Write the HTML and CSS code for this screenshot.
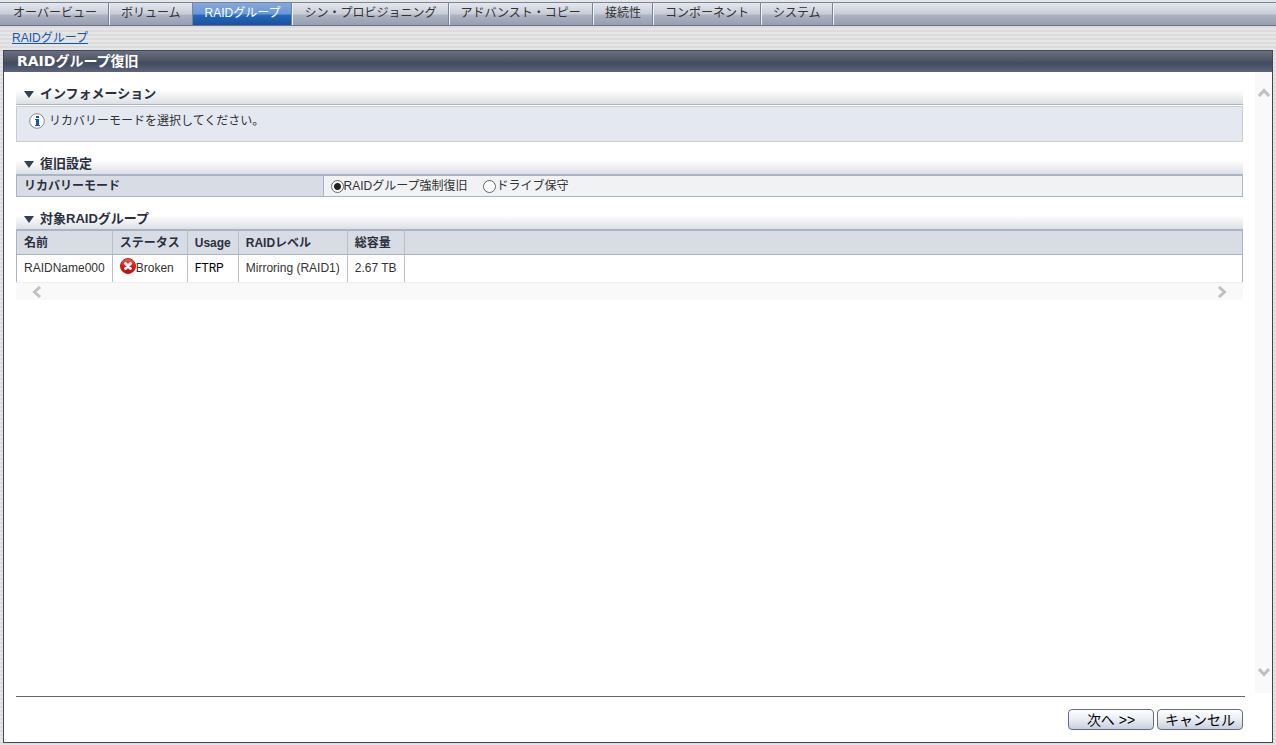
FILE: index.html
```html
<!DOCTYPE html>
<html lang="ja">
  <head>
    <meta charset="UTF-8" />
    <title>RAIDグループ復旧</title>
    <link rel="stylesheet" href="styles.css">
  </head>
  <body>
    <nav class="tabs">
      <a href="#">オーバービュー</a>
      <a href="#">ボリューム</a>
      <a href="#" class="active">RAIDグループ</a>
      <a href="#">シン・プロビジョニング</a>
      <a href="#">アドバンスト・コピー</a>
      <a href="#">接続性</a>
      <a href="#">コンポーネント</a>
      <a href="#">システム</a>
    </nav>
    <div class="breadcrumb"><a href="#">RAIDグループ</a></div>

    <main class="panel">
      <h1>RAIDグループ復旧</h1>
      <div class="scroll-area">
        <div class="content">
          <section>
            <h2>インフォメーション</h2>
            <div class="info">
              <svg width="16" height="16" viewBox="0 0 16 16">
                <circle cx="8" cy="8" r="7.3" fill="#fff" stroke="#85898f" />
                <path d="M7 3h3v2H7zM6 6h4v6h1v1H6v-1h1V7H6z" fill="#1258b0" />
              </svg>
              <span>リカバリーモードを選択してください。</span>
            </div>
          </section>

          <section>
            <h2>復旧設定</h2>
            <table class="setting">
              <tr>
                <th>リカバリーモード</th>
                <td>
                  <div class="radios">
                    <label><input type="radio" name="mode" checked />RAIDグループ強制復旧</label>
                    <label><input type="radio" name="mode" />ドライブ保守</label>
                  </div>
                </td>
              </tr>
            </table>
          </section>

          <section>
            <h2>対象RAIDグループ</h2>
            <table class="list">
              <thead>
                <tr>
                  <th>名前</th>
                  <th>ステータス</th>
                  <th>Usage</th>
                  <th>RAIDレベル</th>
                  <th>総容量</th>
                  <th class="rest"></th>
                </tr>
              </thead>
              <tbody>
                <tr>
                  <td>RAIDName000</td>
                  <td>
                    <div class="status">
                      <svg width="16" height="16" viewBox="0 0 16 16">
                        <defs>
                          <linearGradient id="red" x1="0" y1="0" x2="0" y2="1">
                            <stop offset="0" stop-color="#f0605c" />
                            <stop offset="0.5" stop-color="#e01818" />
                            <stop offset="1" stop-color="#b80c0c" />
                          </linearGradient>
                        </defs>
                        <circle cx="8" cy="8" r="7.5" fill="url(#red)" stroke="#b42020" />
                        <path d="M5.5 5.5l5 5M10.5 5.5l-5 5" stroke="#fff" stroke-width="3" stroke-linecap="round" />
                      </svg>
                      <span>Broken</span>
                    </div>
                  </td>
                  <td class="usage">FTRP</td>
                  <td>Mirroring (RAID1)</td>
                  <td>2.67 TB</td>
                  <td></td>
                </tr>
              </tbody>
            </table>
            <div class="hscroll">
              <svg width="10" height="12" viewBox="0 0 10 12"><path d="M8 1L2.5 6L8 11" /></svg>
              <svg width="10" height="12" viewBox="0 0 10 12"><path d="M2 1l5.5 5L2 11" /></svg>
            </div>
          </section>
        </div>
        <div class="vscroll">
          <svg width="12" height="10" viewBox="0 0 12 10"><path d="M1 8l5-5.5L11 8" /></svg>
          <svg width="12" height="10" viewBox="0 0 12 10"><path d="M1 2l5 5.5L11 2" /></svg>
        </div>
      </div>
      <div class="buttons">
        <button type="button">次へ &gt;&gt;</button>
        <button type="button">キャンセル</button>
      </div>
    </main>
  </body>
</html>
```
FILE: styles.css
```css
* {
  box-sizing: border-box;
}
body {
  display: flex;
  flex-direction: column;
  min-height: 100vh;
  margin: 0;
  font-family: "Liberation Sans", "Noto Sans CJK JP", sans-serif;
  font-size: 12px;
  line-height: 16px;
  color: #333;
  background: repeating-linear-gradient(#e6e6e6 0, #e6e6e6 2px, #dcdcdc 2px, #dcdcdc 4px);
}
.tabs {
  display: flex;
  height: 24px;
  margin-top: 2px;
  padding-left: 1px;
  border-top: 1px solid #77859a;
  border-bottom: 1px solid #6a7388;
  background: linear-gradient(#e4e7ee, #c8ccd6 50%, #adb3c2 55%, #969eb0);
}
.tabs a {
  padding: 2px 11px 0 12px;
  border-right: 1px solid #77859a;
  box-shadow: 1px 0 #eef1f6;
  color: #333;
  text-decoration: none;
  white-space: nowrap;
}
.tabs a.active {
  color: #fff;
  background: linear-gradient(#84a8dc, #6a98d4 50%, #2468bc 55%, #1c50a0);
}
.breadcrumb {
  height: 24px;
  padding: 4px 12px;
}
.breadcrumb a {
  color: #1258b0;
}
.panel {
  display: flex;
  flex-direction: column;
  flex: 1;
  margin: 0 3px 2px;
  border: 1px solid #3f4656;
  background: #fff;
}
h1 {
  height: 21px;
  margin: 0;
  padding: 0 13px;
  font-family: "DejaVu Sans", "Noto Sans CJK JP", sans-serif;
  font-size: 14px;
  line-height: 20px;
  color: #fff;
  background: linear-gradient(#697082, #4c515e 50%, #404b5f 55%, #5c6478);
}
.scroll-area {
  display: flex;
  flex: 1;
}
.content {
  flex: 1;
  padding: 12px 12px 0;
}
h2 {
  display: flex;
  align-items: center;
  gap: 6px;
  height: 21px;
  margin: 0;
  padding-left: 8px;
  font-size: 13px;
  color: #2b3040;
  background: linear-gradient(#fff 30%, #dce0e5);
  border-bottom: 1px solid #a9b5c5;
}
h2::before {
  content: "";
  border: 5px solid transparent;
  border-top: 7px solid #364052;
  border-bottom: 0;
}
section {
  margin-bottom: 12px;
}
.info {
  display: flex;
  gap: 4px;
  height: 36px;
  margin-top: 1px;
  padding: 6px 12px;
  border: 1px solid #ccc;
  background: #e4e8f1;
}
table {
  width: 100%;
  border-collapse: collapse;
}
th,
td {
  height: 21px;
  padding: 0 7px;
  text-align: left;
  white-space: nowrap;
}
th {
  color: #2b3040;
  background: #d8dce4;
}
.setting th,
.setting td {
  border: 1px solid #a9b5c5;
}
.setting th {
  width: 25%;
}
.setting td {
  background: #f1f2f4;
}
.radios {
  display: flex;
  gap: 16px;
}
.radios label {
  display: flex;
  align-items: center;
}
input[type="radio"] {
  appearance: none;
  width: 13px;
  height: 13px;
  margin: 0;
  border: 1px solid #666;
  border-radius: 50%;
  background: #fff;
}
input[type="radio"]:checked {
  background: radial-gradient(#222 0, #222 3px, #fff 4px);
}
.list {
  border-right: 1px solid #a9b5c5;
  border-left: 1px solid #a9b5c5;
}
.list th {
  height: 24px;
  border-top: 1px solid #a9b5c5;
  border-bottom: 1px solid #a9b5c5;
}
.list th + th,
.list td + td {
  border-left: 1px solid #b9c0cc;
}
.list td {
  height: 27px;
}
.list .rest {
  width: 100%;
}
.list .usage {
  font-family: Roboto, sans-serif;
  color: #000;
}
.status {
  display: flex;
  align-items: flex-end;
  height: 20px;
  padding-bottom: 2px;
}
.status svg {
  align-self: flex-start;
}
.hscroll,
.vscroll {
  display: flex;
  justify-content: space-between;
  background: #f9f9f9;
}
.hscroll {
  height: 18px;
  padding: 3px 16px;
  border-top: 1px solid #eee;
}
.vscroll {
  flex-direction: column;
  align-items: center;
  width: 17px;
  padding: 16px 0;
}
.hscroll path,
.vscroll path {
  fill: none;
  stroke: #c0c0c0;
  stroke-width: 3;
}
.buttons {
  display: flex;
  justify-content: flex-end;
  gap: 3px;
  margin: 3px 27px 0 12px;
  padding: 12px 2px 12px 0;
  border-top: 1px solid #666;
}
button {
  width: 86px;
  height: 21px;
  padding: 0;
  border: 1px solid #646c84;
  border-radius: 4px;
  font-family: inherit;
  font-size: 14px;
  line-height: 18px;
  color: #000;
  background: linear-gradient(#fff, #e8ecf3 50%, #c8d0de);
}
```
